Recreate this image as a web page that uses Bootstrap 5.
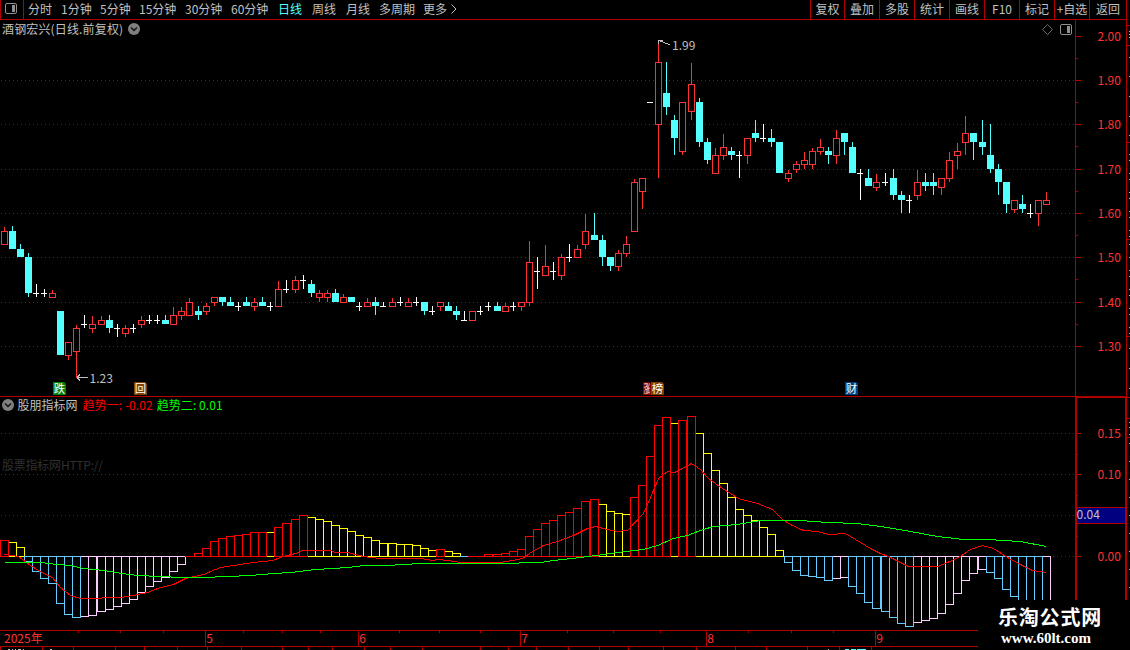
<!DOCTYPE html>
<html lang="zh-CN">
<head>
    <meta charset="utf-8">
    <title>酒钢宏兴 日线</title>
    <link rel="stylesheet" href="https://cdn.jsdelivr.net/npm/bootstrap@5.3.0/dist/css/bootstrap.min.css">
    <style>
        body { width: 1130px; height: 650px; background: #000; color: #c0c0c0; font: 12px/18px "Noto Sans CJK SC", sans-serif; }
        svg { display: block; flex: none; overflow: visible; }
        svg text { font-size: 12px; white-space: pre; }
        svg .flag-text { font-size: 11px; }
        .topbar { height: 20px; line-height: 18px; border-bottom: 1px solid #b00000; width: 1127px; border-right: 1px solid #b00000; }
        .layout-btn { width: 24px; border: solid #b00000; border-width: 0 1px; }
        .periods { display: grid; grid-template-columns: 33px 39px 39px 46px 46px 47px 34px 34px 33px 44px 28px 10px; margin-left: 4px; }
        .periods .current { color: #54ffff; }
        .tools { display: grid; grid-template-columns: 34px 35px 35px 35px 35px 35px 35px 35px 37px; }
        .tools span { border-left: 1px solid #b00000; text-align: center; white-space: nowrap; }
        .plots { width: 1075px; }
        .stock-title { height: 18px; padding-left: 2px; padding-right: 2px; }
        .stock-title .name { letter-spacing: .15px; }
        .ind-title { height: 18px; border-top: 1px solid #b00000; line-height: 14px; padding-left: 2px; padding-bottom: 2px; }
        .ind-title .ind-name { margin-left: 2.5px; }
        .ind-title .first { color: #ff0000; margin-left: 5px; letter-spacing: .07px; }
        .ind-title .second { color: #00ff00; letter-spacing: .07px; }
        .site { right: 0; bottom: 0; width: 152px; height: 50px; background: #000; color: #fff; padding: 7px 0 0 20px; }
        .site .cn { font: bold 20px/23px "Liberation Sans", "Noto Sans CJK SC", sans-serif; letter-spacing: .8px; }
        .site .url { font: bold 15px/17px "Liberation Serif", serif; padding-left: 3px; }
    </style>
</head>
<body class="position-relative overflow-hidden">
    <header class="topbar d-flex">
        <div class="layout-btn">
            <svg width="22" height="18" viewBox="1 0 22 18" fill="none" stroke="#909090"><rect x="5.5" y="3.5" width="11" height="10" rx="1.5"/><path d="M12 5h3v7h-3z" fill="#909090" stroke="none"/></svg>
        </div>
        <nav class="periods">
            <span>分时</span><span>1分钟</span><span>5分钟</span><span>15分钟</span><span>30分钟</span><span>60分钟</span><span class="current">日线</span><span>周线</span><span>月线</span><span>多周期</span><span>更多</span>
            <svg width="8" height="18" fill="none" stroke="#c0c0c0"><path d="M.5 4.5L5 9 .5 13.5"/></svg>
        </nav>
        <nav class="tools ms-auto">
            <span>复权</span><span>叠加</span><span>多股</span><span>统计</span><span>画线</span><span>F10</span><span>标记</span><span>+自选</span><span>返回</span>
        </nav>
    </header>

    <main class="d-flex">
        <div class="plots d-flex flex-column">
            <div class="stock-title d-flex align-items-center">
                <span class="name">酒钢宏兴(日线.前复权)</span>
                <svg class="ms-1" width="14" height="14"><circle cx="7" cy="7" r="6" fill="#808080"/><path d="M4 5.5l3 3 3-3" fill="none" stroke="#111" stroke-width="1.5"/></svg>
                <svg class="ms-auto" width="33" height="14" viewBox="0 0 33 14" fill="none" stroke="#909090"><path d="M2.5 7.5l5-5 5 5-5 5z" stroke="#777" stroke-width=".9"/><rect x="20.5" y="2.5" width="11" height="10" rx="1.5"/><path d="M27 4h3v7h-3z" fill="#909090" stroke="none"/></svg>
            </div>
            <svg id="price" width="1075" height="358" viewBox="0 38 1075 358"></svg>
            <div class="ind-title d-flex align-items-center">
                <svg width="13" height="14"><circle cx="6" cy="7" r="6" fill="#808080"/><path d="M3 5.5l3 3 3-3" fill="none" stroke="#111" stroke-width="1.5"/></svg>
                <span class="ind-name">股朋指标网</span>
                <span class="first">趋势一: -0.02</span>
                <span class="second ms-1">趋势二: 0.01</span>
            </div>
            <svg id="trend" width="1075" height="216" viewBox="0 414 1075 216"></svg>
            <svg id="dates" width="1075" height="20" viewBox="0 630 1075 20"></svg>
        </div>
        <svg id="scale" width="55" height="630" viewBox="1075 20 55 630"></svg>
    </main>

    <div class="site position-absolute">
        <div class="cn">乐淘公式网</div>
        <div class="url">www.60lt.com</div>
    </div>

    <script src="https://cdn.jsdelivr.net/npm/bootstrap@5.3.0/dist/js/bootstrap.bundle.min.js"></script>
    <script>
        const AXIS = '#b00000', LABEL = '#ff3232', GREY = '#c0c0c0';
        const UP = '#ff3232', DOWN = '#54ffff', FLAT = '#ffffff';

        const fill = (x, y, w, h, c) => `<rect x="${x}" y="${y}" width="${w}" height="${h}" fill="${c}" shape-rendering="crispEdges"/>`;
        const box = (x, y, w, h, c) => `<rect x="${x + .5}" y="${y + .5}" width="${w - 1}" height="${h - 1}" fill="none" stroke="${c}" shape-rendering="crispEdges"/>`;
        const label = (x, y, s, c) => `<text x="${x}" y="${y}" fill="${c}">${s}</text>`;
        const dotted = y => `<path d="M1 ${y + .5}H1075" stroke="${AXIS}" stroke-dasharray="1 3" shape-rendering="crispEdges"/>`;
        const put = (id, s) => { document.getElementById(id).innerHTML = s; };

        // centre column of bar i
        const barX = i => Math.floor(4.035 + i * (8 + 1 / 12.1));

        // kind, wick top, body top, body bottom, wick bottom (r = up, c = down, w = unchanged)
        const candles = `r227,231,244,244 c226,231,248,248 c244,249,256,256 c253,257,292,296 w284,293,293,296 w289,293,293,296 r290,293,297,297 c311,311,354,354 r342,342,355,359 r325,328,351,377
            w315,324,324,327 r316,324,328,332 r316,320,324,324 c315,320,327,332 w324,328,328,336 r325,328,333,336 w324,328,328,332 r316,320,324,327 w315,320,320,323 w315,320,320,323
            c315,320,323,323 r307,315,324,324 r307,311,315,319 r298,302,315,315 c306,311,314,319 r303,306,311,314 r297,297,302,305 c297,297,301,305 c297,302,305,305 w302,306,306,310
            c297,302,305,305 r298,302,306,310 c297,302,305,305 w302,306,306,310 r281,289,306,306 w280,289,289,292 r276,280,289,292 w275,280,280,288 c280,284,292,296 r290,293,297,301
            r290,293,297,301 c289,293,301,301 r294,297,302,302 c297,297,301,301 w302,306,306,310 r298,302,306,306 c297,302,305,314 w302,306,306,306 r298,302,306,306 w297,302,302,305
            r298,302,306,306 w297,302,302,305 c302,302,310,314 w306,311,311,314 r302,302,306,310 c302,306,310,310 c306,311,314,319 w311,320,320,320 r311,311,320,320 w306,311,311,314
            w302,306,306,310 c302,306,310,310 r303,306,311,311 w302,306,306,310 r302,302,306,310 r241,262,302,305 w257,271,271,288 r245,266,275,275 w262,271,271,279 r254,257,275,279
            w244,257,257,261 r245,249,257,257 r214,231,244,248 c213,235,239,239 c235,240,256,265 c257,257,265,270 r250,253,266,270 r236,244,253,256 r179,182,231,231 r178,178,191,208
            w102,102,102,102 r43,62,124,177 c62,93,106,114 c115,120,137,154 r102,102,151,154 r63,84,111,119 c98,102,141,146 c138,142,159,163 r148,155,173,173 r134,147,155,159
            c147,151,154,159 w151,155,155,177 r138,138,155,163 c120,133,137,141 w124,138,138,141 c129,138,141,146 c142,142,172,172 r170,173,178,181 r161,164,169,172 r152,160,164,168
            r148,151,164,168 r139,147,151,154 c147,151,154,163 r130,138,155,163 c133,133,141,154 c142,147,172,172 w169,173,173,199 c169,178,185,185 r174,182,187,190 w173,182,182,185
            c169,178,194,199 c191,195,199,212 w195,200,200,212 r170,182,195,199 c173,182,185,190 c173,182,185,194 r178,178,187,194 r152,160,178,181 r143,151,155,168 r116,133,142,154
            c133,133,141,159 c120,142,146,154 c124,155,168,172 c164,169,181,194 c182,182,203,212 r200,200,209,212 c195,204,208,212 w204,213,213,217 r200,200,213,225 r192,200,204,204`.trim().split(/\s+/);

        function drawPrice() {
            let s = [80, 124, 169, 213, 257, 302, 346].map(dotted).join('');
            candles.forEach((item, i) => {
                const kind = item[0], x = barX(i);
                const [high, top, bottom, low] = item.slice(1).split(',').map(Number);
                if (kind === 'r') {
                    s += fill(x, high, 1, top - high, UP) + fill(x, bottom, 1, low - bottom + 1, UP);
                    s += fill(x - 3, top, 7, bottom - top + 1, '#000') + box(x - 3, top, 7, bottom - top + 1, UP);
                } else {
                    const c = kind === 'c' ? DOWN : FLAT;
                    s += fill(x, high, 1, low - high + 1, c) + fill(x - 3, top, kind === 'c' ? 7 : 6, bottom - top + 1, c);
                }
            });
            // high and low callouts
            s += `<g fill="none" stroke="${GREY}" shape-rendering="crispEdges"><path d="M76.5 377.5H88M77 377.5l3-3M77 377.5l3 3"/><path d="M658.5 44v-4h4M659 40.5l5 2 6 2.5"/></g>`;
            s += label(89.5, 383, '1.23', GREY) + label(672, 50, '1.99', GREY);
            // event flags, the glyph is squeezed to the flag's width
            const flag = (x, w, c, t) => `<path d="M${x} 382h${w - 2}l2 2v11h-${w}z" fill="${c}"/>`
                + `<text class="flag-text" transform="translate(${x + .7} 392.5) scale(${(w - 1.6) / 11} 1)" fill="#fff">${t}</text>`;
            s += flag(53, 13, '#008000', '跌') + flag(134, 13, '#804000', '回') + flag(643, 8, '#800000', '涨') + flag(651, 13, '#804000', '榜') + flag(845, 13, '#004080', '财');
            put('price', s);
        }

        // histogram: colour key and far edge of every bar
        const ZERO = 556;
        const hist = `r540 y542 y547 b561 b571 b578 b583 b603 b614 b617 p616 p615 p611 p609 p606 p603 p599 p592 p586 p581 p577 p571 p564 r556 r553 r548 r541 r538 r536 r535 r534 r532 r532 y532
            r527 r523 r519 r515 y517 y519 y521 y525 y528 y531 y535 y537 y540 y543 y543 y544 y544 y545 y548 y550 r549 y551 y553 b556 r556 r556 r554 r554 r553 r551 r549 r536 r529 r523 r520 r515
            r512 r508 r501 r499 y504 y511 y513 y514 r497 r485 r456 r425 r417 y423 r420 r416 y433 y453 y470 y483 y497 y509 y515 y520 y527 y534 y550
            b562 b570 b575 b576 b577 b580 p578 p577 b586 b593 b602 b608 b611 b617 b623 b626 p622 p620 p618 p613 p604 p593 p580 p573 p569 b572 b578 b589 b596 b604 b609 b612 p611`.trim().split(/\s+/);
        const histColor = { r: '#ff0000', y: '#ffff00', b: '#66ccff', p: '#ffccff' };

        const fast = '4,554 10,555 18,556 30,565 43,573 52,577 60,587 70,595 80,598 97,598 107,597 120,597 133,595 147,592 160,587 173,584 185,578 203,574 220,567 233,565 253,562 272,560 283,556 295,553 302,550 330,550 335,552 348,552 358,555 370,557 380,558 420,558 432,560 438,559 447,560 460,562 483,562 500,562 517,559 522,558 532,551 543,545 557,541 573,535 587,528 595,526 607,529 617,531 627,530 643,513 650,497 658,478 667,471 674,472 682,468 691,463 700,469 708,478 722,488 738,498 757,503 772,509 782,519 790,524 803,530 817,531 828,534 845,533 855,539 870,548 880,553 888,556 900,562 908,566 937,566 947,562 960,556 970,549 982,545 993,548 1007,557 1020,564 1032,570 1046,572';
        const slow = '4,562 40,562 57,564 70,565 83,568 103,570 122,573 137,575 160,576 180,577 202,577 227,576 250,575 273,573 290,572 315,569 348,567 363,565 387,565 403,564 420,563 517,563 520,562 540,562 553,560 580,557 603,554 617,552 643,549 657,545 673,538 687,535 700,530 713,526 737,524 760,520 800,520 827,522 857,523 880,526 910,531 937,536 963,539 987,539 1020,541 1046,546';

        function drawTrend() {
            let s = [433, 474, 515, 556].map(dotted).join('');
            s += `<text x="2" y="470" fill="#303030" textLength="101">股票指标网HTTP://</text>`;
            // rising red and falling blue own the shared edges, so they go last
            for (const key of 'ypbr') {
                hist.forEach((item, i) => {
                    if (item[0] !== key) return;
                    const edge = Number(item.slice(1));
                    s += box(barX(i) - 4, Math.min(edge, ZERO), 9, Math.abs(edge - ZERO) + 1, histColor[key]);
                    if (edge === ZERO) s += fill(barX(i) - 4, ZERO, 9, 1, histColor[key]);
                });
            }
            const line = (pts, c) => `<polyline points="${pts}" transform="translate(.5 .5)" fill="none" stroke="${c}" shape-rendering="crispEdges"/>`;
            s += line(fast, '#ff0000') + line(slow, '#00ff00');
            put('trend', s);
        }

        function drawDates() {
            let s = fill(0, 630, 1075, 1, AXIS) + fill(0, 646, 1075, 1, AXIS);
            [78, 120, 163, 243, 282, 320, 399, 439, 480, 567, 613, 660, 748, 791, 833].forEach(x => { s += fill(x, 631, 1, 2, AXIS); });
            [[205, '5'], [358, '6'], [520, '7'], [706, '8'], [875, '9']].forEach(([x, m]) => {
                s += fill(x, 631, 1, 15, AXIS) + label(x + 1.2, 643, m, LABEL);
            });
            s += label(4, 643, '2025年', LABEL);
            // top edge of the index ticker
            [0, 42, 73, 115, 144, 177, 207, 241, 282, 308, 332, 364, 390, 422, 480, 508, 536, 568, 599, 628, 663, 696, 735, 766, 807, 839, 871].forEach(x => { s += fill(x, 647, 1, 3, AXIS); });
            [[8, 2], [12, 1], [15, 1], [18, 3], [23, 1], [50, 2], [828, 1]].forEach(([x, w]) => { s += fill(x, 649, w, 1, GREY); });
            s += fill(845, 649, 4, 1, DOWN) + fill(851, 649, 5, 1, DOWN) + fill(857, 649, 9, 1, DOWN);
            put('dates', s);
        }

        function drawScale() {
            let s = fill(1075, 20, 1, 376, AXIS) + fill(1126, 20, 1, 580, AXIS);
            [36, 80, 124, 169, 213, 257, 302, 346].forEach((y, i) => {
                s += fill(1076, y, 5, 1, AXIS) + label(1097.5, y + 5, (2 - i / 10).toFixed(2), LABEL);
                if (i < 7) s += fill(1076, y + 22, 2, 1, AXIS);
            });
            s += fill(1075, 396, 52, 2, AXIS) + fill(1075, 396, 2, 210, AXIS) + fill(1125, 396, 2, 210, AXIS);
            [[433, '0.15'], [474, '0.10'], [556, '0.00']].forEach(([y, t]) => {
                s += fill(1077, y, 4, 1, AXIS) + label(1097.5, y + 5, t, LABEL);
            });
            [454, 495, 536].forEach(y => { s += fill(1077, y, 1, 1, AXIS); });
            // cursor value
            s += fill(1077, 507, 48, 17, '#000080') + fill(1077, 507, 48, 1, AXIS) + fill(1077, 523, 48, 1, AXIS) + label(1076.5, 519, '0.04', GREY);
            // left edge of the quote panel
            [25, 45, 142, 239, 336, 397, 418, 437].forEach(y => { s += fill(1127, y, 3, 1, AXIS); });
            [31, 34, 37, 57, 76, 96, 116, 135, 154, 160, 173, 179, 192, 198, 211, 217, 230, 236, 244, 257, 270, 276, 289, 295, 308, 314, 327, 333, 348, 368, 388, 422, 427, 434, 443, 461, 479, 497, 515, 533, 551, 569, 587].forEach(y => { s += fill(1129, y, 1, 1, GREY); });
            put('scale', s);
        }

        drawPrice();
        drawTrend();
        drawDates();
        drawScale();
    </script>
</body>
</html>
